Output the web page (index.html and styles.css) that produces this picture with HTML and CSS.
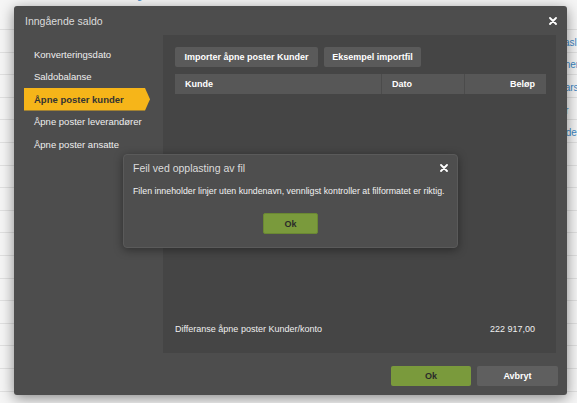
FILE: index.html
```html
<!DOCTYPE html>
<html lang="no">
<head>
<meta charset="utf-8">
<title>Inngående saldo</title>
<link rel="stylesheet" href="styles.css">
</head>
<body>
<div class="page">
  <div class="page-top"><span class="top-link">Leverandørkategorier</span></div>
  <div class="page-row"><span class="row-link">Vasl</span></div>
  <div class="page-row"><span class="row-link">Ener</span></div>
  <div class="page-row"><span class="row-link">Kars</span></div>
  <div class="page-row"><span class="row-link">Ur</span></div>
  <div class="page-row"><span class="row-link">Oder</span></div>
  <div class="page-row"></div>
  <div class="page-row"></div>
  <div class="page-row"></div>
  <div class="page-row"></div>
  <div class="page-row"></div>
  <div class="page-row"></div>
  <div class="page-row"></div>
  <div class="page-row"></div>
  <div class="page-row"></div>
  <div class="page-row"></div>
  <div class="page-row"></div>
</div>

<div class="modal">
  <div class="modal-header">
    <span class="modal-title">Inngående saldo</span>
    <svg class="x-icon" width="8" height="8" viewBox="0 0 8 8"><path d="M1 1L7 7M7 1L1 7" stroke="#fff" stroke-width="1.8" stroke-linecap="round"/></svg>
  </div>
  <div class="modal-body">
    <nav class="sidebar">
      <div class="nav-item">Konverteringsdato</div>
      <div class="nav-item">Saldobalanse</div>
      <div class="nav-item active">Åpne poster kunder</div>
      <div class="nav-item">Åpne poster leverandører</div>
      <div class="nav-item">Åpne poster ansatte</div>
    </nav>
    <section class="panel">
      <div class="toolbar">
        <div class="btn btn-import">Importer åpne poster Kunder</div>
        <div class="btn btn-example">Eksempel importfil</div>
      </div>
      <div class="table-head">
        <div class="th">Kunde</div>
        <div class="th">Dato</div>
        <div class="th th-right">Beløp</div>
      </div>
      <div class="table-body"></div>
      <div class="summary">
        <span>Differanse åpne poster Kunder/konto</span>
        <span>222 917,00</span>
      </div>
    </section>
  </div>
  <div class="modal-footer">
    <div class="fbtn fbtn-ok">Ok</div>
    <div class="fbtn fbtn-cancel">Avbryt</div>
  </div>
</div>

<div class="dialog">
  <div class="dialog-head">
    <span class="dialog-title">Feil ved opplasting av fil</span>
    <svg class="x-icon" width="8" height="8" viewBox="0 0 8 8"><path d="M1 1L7 7M7 1L1 7" stroke="#fff" stroke-width="1.8" stroke-linecap="round"/></svg>
  </div>
  <div class="dialog-msg">Filen inneholder linjer uten kundenavn, vennligst kontroller at filformatet er riktig.</div>
  <div class="dialog-actions">
    <div class="dbtn">Ok</div>
  </div>
</div>
</body>
</html>
```

FILE: styles.css
```css
* { box-sizing: border-box; }

body {
  margin: 0;
  width: 577px;
  height: 403px;
  overflow: hidden;
  position: relative;
  background: #f5f5f5;
  font-family: "Liberation Sans", Arial, sans-serif;
}

/* background page */
.page {
  display: flex;
  flex-direction: column;
}
.page-top {
  height: 30px;
  border-bottom: 1px solid #e0e0e0;
  padding-left: 67px;
  overflow: hidden;
}
.top-link {
  display: block;
  margin-top: -10px;
  font-size: 10px;
  line-height: 12px;
  color: #3b87c4;
}
.page-row {
  height: 22.6px;
  border-bottom: 1px solid #e0e0e0;
  display: flex;
  align-items: center;
  padding: 3px 0 0 558px;
  overflow: hidden;
}
.row-link {
  font-size: 10px;
  color: #3b87c4;
  white-space: nowrap;
}

/* main modal */
.modal {
  position: absolute;
  left: 14px;
  top: 6px;
  width: 553px;
  height: 389px;
  background: #4d4d4d;
  border-radius: 3px;
  box-shadow: 0 3px 14px rgba(0, 0, 0, 0.45);
  display: flex;
  flex-direction: column;
}
.modal-header {
  height: 29px;
  display: flex;
  align-items: center;
  justify-content: space-between;
  padding: 0 10px 0 11px;
}
.modal-title {
  color: #dcdcdc;
  font-size: 10.5px;
}
.x-icon { display: block; }

.modal-body {
  display: flex;
  height: 318px;
}
.sidebar {
  width: 149px;
  padding: 8px 0 0 10px;
}
.nav-item {
  height: 22.5px;
  display: flex;
  align-items: center;
  padding-left: 10px;
  color: #efefef;
  font-size: 9.5px;
  white-space: nowrap;
}
.nav-item.active {
  width: 126px;
  background: #f6b519;
  color: #333;
  font-weight: bold;
  clip-path: polygon(0 0, calc(100% - 5px) 0, 100% 50%, calc(100% - 5px) 100%, 0 100%);
}

.panel {
  width: 393px;
  height: 318px;
  background: #454545;
  padding: 12px 10px 14px 12px;
  display: flex;
  flex-direction: column;
}
.toolbar {
  display: flex;
  gap: 6px;
}
.btn {
  height: 20px;
  display: flex;
  align-items: center;
  justify-content: center;
  background: #5a5a5a;
  color: #fff;
  font-weight: bold;
  font-size: 9px;
  border-radius: 2px;
  white-space: nowrap;
}
.btn-import { width: 143px; }
.btn-example { width: 97px; }

.table-head {
  margin-top: 7px;
  height: 20px;
  display: grid;
  grid-template-columns: 206px 83px 82px;
  background: #575757;
}
.th {
  display: flex;
  align-items: center;
  padding-left: 10px;
  color: #fff;
  font-weight: bold;
  font-size: 9px;
}
.th + .th { border-left: 1px solid #4b4b4b; }
.th-right {
  justify-content: flex-end;
  padding: 0 11px 0 0;
}
.table-body { flex: 1; }

.summary {
  height: 20px;
  display: flex;
  align-items: center;
  justify-content: space-between;
  padding-right: 11px;
  color: #efefef;
  font-size: 9px;
}

.modal-footer {
  height: 42px;
  display: flex;
  justify-content: flex-end;
  gap: 6px;
  padding: 13px 9px 0 0;
}
.fbtn {
  height: 20px;
  display: flex;
  align-items: center;
  justify-content: center;
  font-weight: bold;
  font-size: 9px;
  border-radius: 2px;
}
.fbtn-ok {
  width: 80px;
  background: #7a9a3c;
  color: #2a2a2a;
}
.fbtn-cancel {
  width: 81px;
  background: #5f5f5f;
  color: #fff;
}

/* error dialog */
.dialog {
  position: absolute;
  left: 123px;
  top: 154px;
  width: 335px;
  height: 94px;
  background: #4e4e4e;
  border: 1px solid #5a5a5a;
  border-radius: 4px;
  box-shadow: 0 2px 10px rgba(0, 0, 0, 0.4);
  padding: 0 9px 0 9px;
}
.dialog-head {
  height: 26px;
  display: flex;
  align-items: center;
  justify-content: space-between;
}
.dialog-title {
  color: #dcdcdc;
  font-size: 10.5px;
}
.dialog-msg {
  margin-top: 4px;
  line-height: 12px;
  color: #f2f2f2;
  font-size: 8.8px;
  white-space: nowrap;
}
.dialog-actions {
  margin-top: 16px;
  display: flex;
  justify-content: center;
}
.dbtn {
  width: 55px;
  height: 21px;
  display: flex;
  align-items: center;
  justify-content: center;
  background: #7a9a3c;
  border: 1px solid #6a8833;
  border-radius: 2px;
  color: #2a2a2a;
  font-weight: bold;
  font-size: 9px;
}
```
